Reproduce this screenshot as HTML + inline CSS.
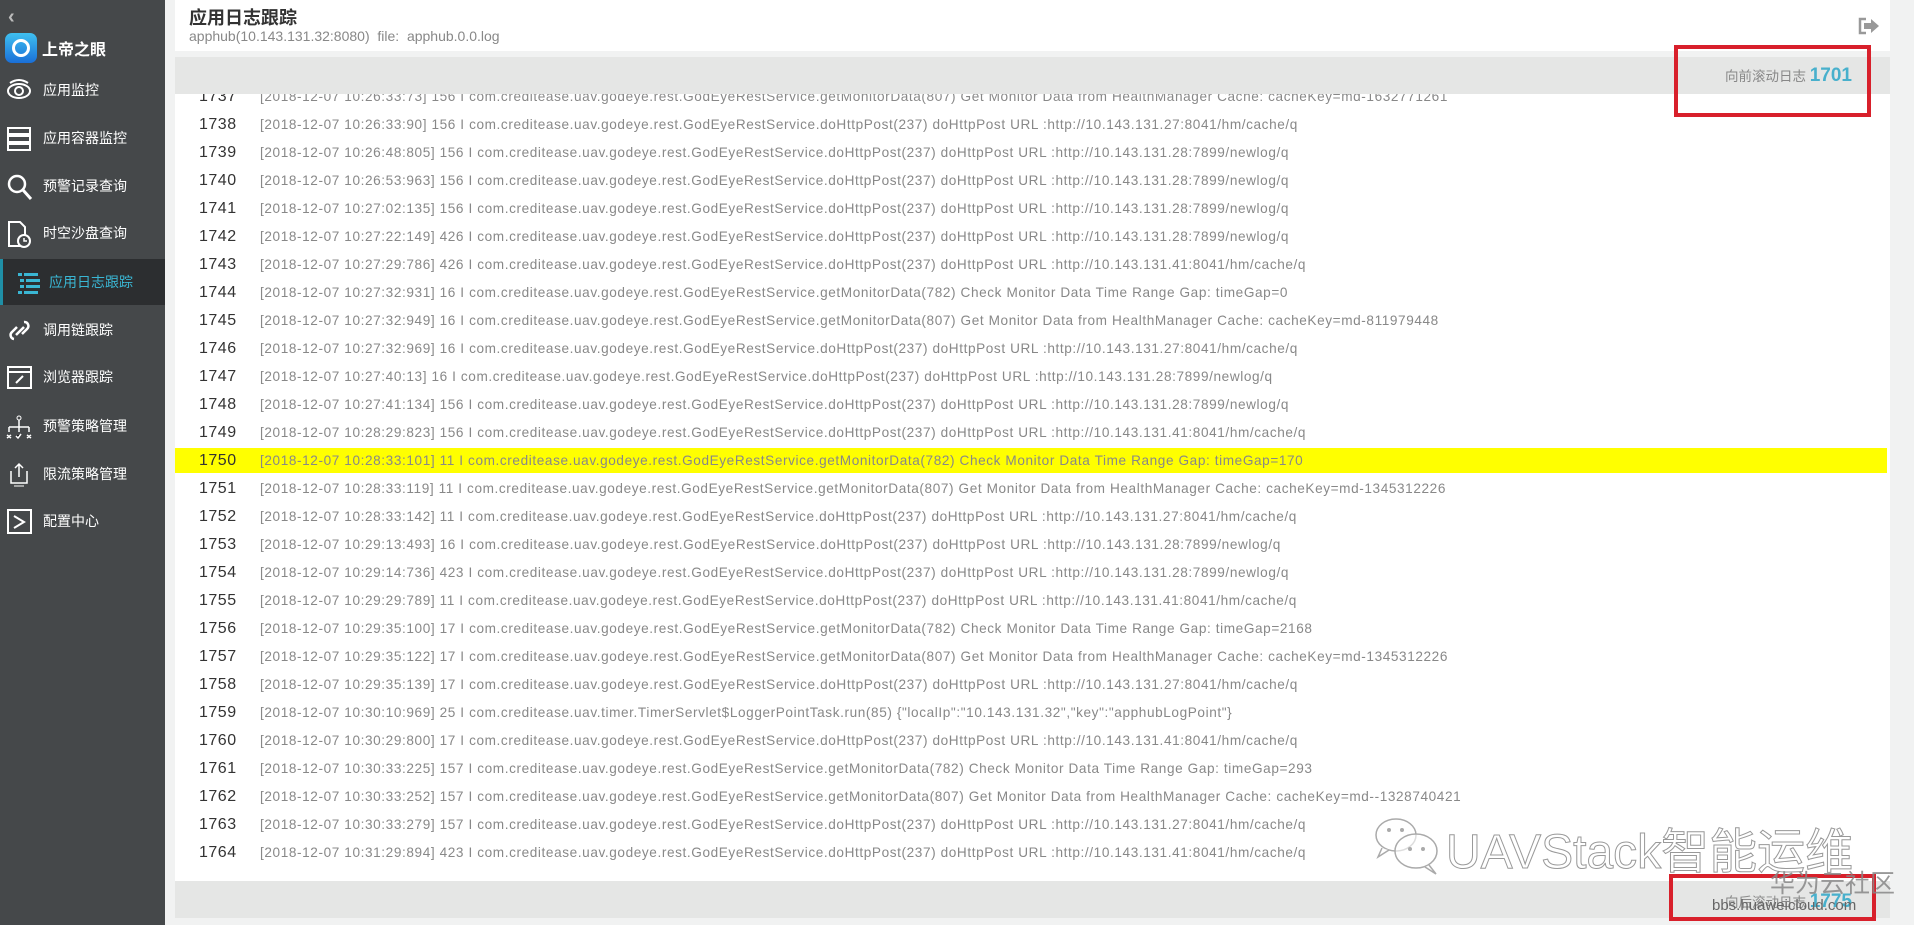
<!DOCTYPE html>
<html><head><meta charset="utf-8">
<style>
*{margin:0;padding:0;box-sizing:border-box}
html{width:1914px;height:925px;overflow:hidden}
body{width:1914px;height:925px;overflow:hidden;background:#f1f2f2;font-family:"Liberation Sans","Noto Sans CJK SC",sans-serif;position:relative}
#side{position:absolute;left:0;top:0;width:165px;height:925px;background:#45484a}
.mi{position:absolute;left:0;width:165px;height:46px;color:#fff;font-size:14px;line-height:46px;padding-left:43px}
.mi svg{position:absolute;left:6px;top:10px}
.act{background:#2c2e30;border-left:3px solid #1f8fa6;color:#3ab6d3;padding-left:46px}
#hdr{position:absolute;left:175px;top:0;width:1715px;height:51px;background:#fff}
#bar{position:absolute;left:175px;top:57px;width:1715px;height:37px;background:#e5e6e5}
#bar2{position:absolute;left:175px;top:881px;width:1715px;height:37px;background:#e5e6e5}
#log{position:absolute;left:175px;top:94px;width:1715px;height:787px;background:#fff;overflow:hidden}
.r{position:absolute;left:0;width:1712px;height:28px;line-height:28px;white-space:nowrap}
.r b{position:absolute;left:24px;font-weight:normal;font-size:16px;color:#333;letter-spacing:0.5px}
.r span{position:absolute;left:85px;font-size:13.6px;color:#888;letter-spacing:0.6px}
.hl{background:#ffff00;top:354px}
.red{position:absolute;border:4px solid #d8202b}
.nw{white-space:nowrap}
</style></head><body>
<div id="side">
 <div style="position:absolute;left:8px;top:6px;color:#bbb;font-size:20px;font-weight:bold">&#8249;</div>
 <div style="position:absolute;left:5px;top:33px;width:32px;height:30px;border-radius:7px;background:linear-gradient(#3fc0f0,#1a6fd8)"><div style="position:absolute;left:7px;top:6px;width:18px;height:18px;border-radius:50%;border:3px solid #fff"></div></div>
 <div style="position:absolute;left:42px;top:36px;color:#fff;font-size:16px;font-weight:bold">上帝之眼</div>
 <div class="mi" style="top:67px"><svg width="28" height="26"><ellipse cx="13" cy="14" rx="11" ry="7" fill="none" stroke="#fff" stroke-width="2"/><circle cx="13" cy="14" r="4" fill="none" stroke="#fff" stroke-width="2"/><path d="M4 6Q13 0 22 6" fill="none" stroke="#fff" stroke-width="2"/></svg>应用监控</div>
 <div class="mi" style="top:115px"><svg width="28" height="28"><rect x="2" y="3" width="22" height="6" fill="none" stroke="#fff" stroke-width="2"/><rect x="2" y="11" width="22" height="6" fill="none" stroke="#fff" stroke-width="2"/><rect x="2" y="19" width="22" height="6" fill="none" stroke="#fff" stroke-width="2"/></svg>应用容器监控</div>
 <div class="mi" style="top:163px"><svg width="28" height="28"><circle cx="11" cy="11" r="8" fill="none" stroke="#fff" stroke-width="2.5"/><path d="M17 17L25 26" stroke="#fff" stroke-width="3"/></svg>预警记录查询</div>
 <div class="mi" style="top:210px"><svg width="28" height="30"><path d="M3 2H14L19 7V26H3Z" fill="none" stroke="#fff" stroke-width="2"/><circle cx="18" cy="21" r="6" fill="#45484a" stroke="#fff" stroke-width="2"/><path d="M18 18V21H21" stroke="#fff" stroke-width="1.5" fill="none"/></svg>时空沙盘查询</div>
 <div class="mi act" style="top:259px"><svg width="28" height="28" style="left:14px"><g fill="#3ab6d3"><rect x="1" y="4" width="4" height="3"/><rect x="7" y="4" width="14" height="3"/><rect x="3" y="10" width="4" height="3"/><rect x="9" y="10" width="14" height="3"/><rect x="3" y="16" width="4" height="3"/><rect x="9" y="16" width="14" height="3"/><rect x="1" y="22" width="4" height="3"/><rect x="7" y="22" width="14" height="3"/></g></svg>应用日志跟踪</div>
 <div class="mi" style="top:307px"><svg width="28" height="28"><path d="M8 22a4 4 0 0 1-2-7l5-5M18 5a4 4 0 0 1 3 7l-5 5M10 18l8-8" fill="none" stroke="#fff" stroke-width="2.5"/></svg>调用链跟踪</div>
 <div class="mi" style="top:354px"><svg width="28" height="28"><rect x="2" y="3" width="23" height="21" fill="none" stroke="#fff" stroke-width="2"/><path d="M2 8H25" stroke="#fff" stroke-width="2"/><path d="M10 19l7-7" stroke="#fff" stroke-width="2"/></svg>浏览器跟踪</div>
 <div class="mi" style="top:403px"><svg width="28" height="28"><circle cx="13" cy="5" r="2" fill="none" stroke="#fff"/><path d="M13 7V14M3 14H23M3 14V19M13 14V19M23 14V19" stroke="#fff" stroke-width="1.5" fill="none"/><path d="M1 22l4 3M5 22l-4 3M10 23l2 2 3-4M21 22l4 3M25 22l-4 3" stroke="#fff" stroke-width="1.5"/></svg>预警策略管理</div>
 <div class="mi" style="top:451px"><svg width="28" height="28"><path d="M5 10V22H21V10M13 3V16M9 7l4-4 4 4" stroke="#fff" stroke-width="1.5" fill="none"/><path d="M8 25H18" stroke="#fff"/></svg>限流策略管理</div>
 <div class="mi" style="top:498px"><svg width="28" height="28"><rect x="2" y="2" width="23" height="23" fill="none" stroke="#fff" stroke-width="2"/><path d="M8 8l10 6-10 6" stroke="#fff" stroke-width="2" fill="none"/></svg>配置中心</div>
</div>
<div id="hdr">
 <div style="position:absolute;left:14px;top:4px;font-size:18px;font-weight:bold;color:#333">应用日志跟踪</div>
 <div style="position:absolute;left:14px;top:28px;font-size:14px;color:#888">apphub(10.143.131.32:8080)&nbsp; file:&nbsp; apphub.0.0.log</div>
 <svg style="position:absolute;left:1683px;top:16px" width="22" height="20"><path d="M8 3H2V17H8" fill="none" stroke="#999" stroke-width="2.5"/><path d="M6 7H13V3L21 10 13 17V13H6Z" fill="#999"/></svg>
</div>
<div id="bar"><div class="nw" style="position:absolute;right:38px;top:8px;font-size:13.5px;color:#888">向前滚动日志 <b style="color:#48b0cc;font-size:19px">1701</b></div></div>
<div id="log">
<div class="r" style="top:-11px"><b>1737</b><span>[2018-12-07 10:26:33:73] 156 I com.creditease.uav.godeye.rest.GodEyeRestService.getMonitorData(807) Get Monitor Data from HealthManager Cache: cacheKey=md-1632771261</span></div>
<div class="r" style="top:17px"><b>1738</b><span>[2018-12-07 10:26:33:90] 156 I com.creditease.uav.godeye.rest.GodEyeRestService.doHttpPost(237) doHttpPost URL :http://10.143.131.27:8041/hm/cache/q</span></div>
<div class="r" style="top:45px"><b>1739</b><span>[2018-12-07 10:26:48:805] 156 I com.creditease.uav.godeye.rest.GodEyeRestService.doHttpPost(237) doHttpPost URL :http://10.143.131.28:7899/newlog/q</span></div>
<div class="r" style="top:73px"><b>1740</b><span>[2018-12-07 10:26:53:963] 156 I com.creditease.uav.godeye.rest.GodEyeRestService.doHttpPost(237) doHttpPost URL :http://10.143.131.28:7899/newlog/q</span></div>
<div class="r" style="top:101px"><b>1741</b><span>[2018-12-07 10:27:02:135] 156 I com.creditease.uav.godeye.rest.GodEyeRestService.doHttpPost(237) doHttpPost URL :http://10.143.131.28:7899/newlog/q</span></div>
<div class="r" style="top:129px"><b>1742</b><span>[2018-12-07 10:27:22:149] 426 I com.creditease.uav.godeye.rest.GodEyeRestService.doHttpPost(237) doHttpPost URL :http://10.143.131.28:7899/newlog/q</span></div>
<div class="r" style="top:157px"><b>1743</b><span>[2018-12-07 10:27:29:786] 426 I com.creditease.uav.godeye.rest.GodEyeRestService.doHttpPost(237) doHttpPost URL :http://10.143.131.41:8041/hm/cache/q</span></div>
<div class="r" style="top:185px"><b>1744</b><span>[2018-12-07 10:27:32:931] 16 I com.creditease.uav.godeye.rest.GodEyeRestService.getMonitorData(782) Check Monitor Data Time Range Gap: timeGap=0</span></div>
<div class="r" style="top:213px"><b>1745</b><span>[2018-12-07 10:27:32:949] 16 I com.creditease.uav.godeye.rest.GodEyeRestService.getMonitorData(807) Get Monitor Data from HealthManager Cache: cacheKey=md-811979448</span></div>
<div class="r" style="top:241px"><b>1746</b><span>[2018-12-07 10:27:32:969] 16 I com.creditease.uav.godeye.rest.GodEyeRestService.doHttpPost(237) doHttpPost URL :http://10.143.131.27:8041/hm/cache/q</span></div>
<div class="r" style="top:269px"><b>1747</b><span>[2018-12-07 10:27:40:13] 16 I com.creditease.uav.godeye.rest.GodEyeRestService.doHttpPost(237) doHttpPost URL :http://10.143.131.28:7899/newlog/q</span></div>
<div class="r" style="top:297px"><b>1748</b><span>[2018-12-07 10:27:41:134] 156 I com.creditease.uav.godeye.rest.GodEyeRestService.doHttpPost(237) doHttpPost URL :http://10.143.131.28:7899/newlog/q</span></div>
<div class="r" style="top:325px"><b>1749</b><span>[2018-12-07 10:28:29:823] 156 I com.creditease.uav.godeye.rest.GodEyeRestService.doHttpPost(237) doHttpPost URL :http://10.143.131.41:8041/hm/cache/q</span></div>
<div class="r hl" style="height:25px;line-height:25px;top:354px"><b>1750</b><span>[2018-12-07 10:28:33:101] 11 I com.creditease.uav.godeye.rest.GodEyeRestService.getMonitorData(782) Check Monitor Data Time Range Gap: timeGap=170</span></div>
<div class="r" style="top:381px"><b>1751</b><span>[2018-12-07 10:28:33:119] 11 I com.creditease.uav.godeye.rest.GodEyeRestService.getMonitorData(807) Get Monitor Data from HealthManager Cache: cacheKey=md-1345312226</span></div>
<div class="r" style="top:409px"><b>1752</b><span>[2018-12-07 10:28:33:142] 11 I com.creditease.uav.godeye.rest.GodEyeRestService.doHttpPost(237) doHttpPost URL :http://10.143.131.27:8041/hm/cache/q</span></div>
<div class="r" style="top:437px"><b>1753</b><span>[2018-12-07 10:29:13:493] 16 I com.creditease.uav.godeye.rest.GodEyeRestService.doHttpPost(237) doHttpPost URL :http://10.143.131.28:7899/newlog/q</span></div>
<div class="r" style="top:465px"><b>1754</b><span>[2018-12-07 10:29:14:736] 423 I com.creditease.uav.godeye.rest.GodEyeRestService.doHttpPost(237) doHttpPost URL :http://10.143.131.28:7899/newlog/q</span></div>
<div class="r" style="top:493px"><b>1755</b><span>[2018-12-07 10:29:29:789] 11 I com.creditease.uav.godeye.rest.GodEyeRestService.doHttpPost(237) doHttpPost URL :http://10.143.131.41:8041/hm/cache/q</span></div>
<div class="r" style="top:521px"><b>1756</b><span>[2018-12-07 10:29:35:100] 17 I com.creditease.uav.godeye.rest.GodEyeRestService.getMonitorData(782) Check Monitor Data Time Range Gap: timeGap=2168</span></div>
<div class="r" style="top:549px"><b>1757</b><span>[2018-12-07 10:29:35:122] 17 I com.creditease.uav.godeye.rest.GodEyeRestService.getMonitorData(807) Get Monitor Data from HealthManager Cache: cacheKey=md-1345312226</span></div>
<div class="r" style="top:577px"><b>1758</b><span>[2018-12-07 10:29:35:139] 17 I com.creditease.uav.godeye.rest.GodEyeRestService.doHttpPost(237) doHttpPost URL :http://10.143.131.27:8041/hm/cache/q</span></div>
<div class="r" style="top:605px"><b>1759</b><span>[2018-12-07 10:30:10:969] 25 I com.creditease.uav.timer.TimerServlet$LoggerPointTask.run(85) {"localIp":"10.143.131.32","key":"apphubLogPoint"}</span></div>
<div class="r" style="top:633px"><b>1760</b><span>[2018-12-07 10:30:29:800] 17 I com.creditease.uav.godeye.rest.GodEyeRestService.doHttpPost(237) doHttpPost URL :http://10.143.131.41:8041/hm/cache/q</span></div>
<div class="r" style="top:661px"><b>1761</b><span>[2018-12-07 10:30:33:225] 157 I com.creditease.uav.godeye.rest.GodEyeRestService.getMonitorData(782) Check Monitor Data Time Range Gap: timeGap=293</span></div>
<div class="r" style="top:689px"><b>1762</b><span>[2018-12-07 10:30:33:252] 157 I com.creditease.uav.godeye.rest.GodEyeRestService.getMonitorData(807) Get Monitor Data from HealthManager Cache: cacheKey=md--1328740421</span></div>
<div class="r" style="top:717px"><b>1763</b><span>[2018-12-07 10:30:33:279] 157 I com.creditease.uav.godeye.rest.GodEyeRestService.doHttpPost(237) doHttpPost URL :http://10.143.131.27:8041/hm/cache/q</span></div>
<div class="r" style="top:745px"><b>1764</b><span>[2018-12-07 10:31:29:894] 423 I com.creditease.uav.godeye.rest.GodEyeRestService.doHttpPost(237) doHttpPost URL :http://10.143.131.41:8041/hm/cache/q</span></div>
<div style="position:absolute;left:1715px;top:0;width:14px;height:787px;background:#f1f1f1"></div>
<div style="position:absolute;left:1716px;top:602px;width:12px;height:112px;background:#c1c1c1"></div>
</div>
<div id="bar2"><div class="nw" style="position:absolute;right:38px;top:10px;font-size:13.5px;color:#888">向后滚动日志 <b style="color:#48b0cc;font-size:19px">1775</b></div></div>
<div class="red" style="left:1674px;top:45px;width:197px;height:72px"></div>
<div class="red" style="left:1669px;top:874px;width:207px;height:47px"></div>
<svg style="position:absolute;left:1372px;top:815px" width="72" height="62"><g fill="rgba(255,255,255,.6)" stroke="#aaa" stroke-width="1.5"><ellipse cx="24" cy="20" rx="20" ry="16"/><path d="M10 33L6 42 17 35"/><ellipse cx="44" cy="36" rx="21" ry="17"/><path d="M57 50L64 59 53 52"/></g><g fill="#aaa"><circle cx="17" cy="15" r="2"/><circle cx="30" cy="15" r="2"/><circle cx="38" cy="34" r="2"/><circle cx="51" cy="34" r="2"/></g></svg>
<div class="nw" style="position:absolute;left:1446px;top:812px;font-size:48px;color:rgba(255,255,255,.8);-webkit-text-stroke:1px #999">UAVStack智能运维</div>
<div class="nw" style="position:absolute;left:1770px;top:864px;font-size:25px;color:#888;opacity:.85">华为云社区</div>
<div class="nw" style="position:absolute;left:1712px;top:897px;font-size:15px;color:#666">bbs.huaweicloud.com</div>
</body></html>
